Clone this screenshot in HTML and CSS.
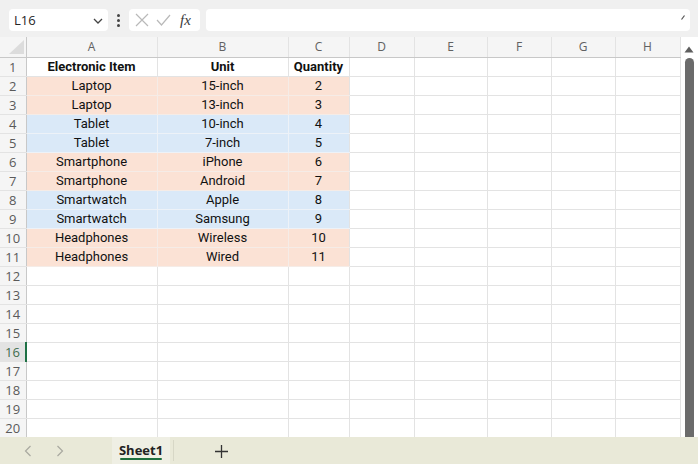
FILE: index.html
```html
<!DOCTYPE html>
<html>
<head>
<meta charset="utf-8">
<link rel="stylesheet" href="styles.css">
</head>
<body>
<div class="app">
  <div class="toolbar">
    <div class="namebox">
      <span class="name">L16</span>
      <svg class="chev" width="10" height="6" viewBox="0 0 10 6"><path d="M1 1 L5 5 L9 1" fill="none" stroke="#444" stroke-width="1.3"/></svg>
    </div>
    <div class="dots"><span></span><span></span><span></span></div>
    <div class="fbtns">
      <svg width="14" height="14" viewBox="0 0 14 14"><path d="M1 1 L13 13 M13 1 L1 13" stroke="#b9b9b9" stroke-width="1.2" fill="none"/></svg>
      <svg width="15" height="12" viewBox="0 0 15 12"><path d="M1 6 L5.5 11 L14 1" stroke="#b9b9b9" stroke-width="1.2" fill="none"/></svg>
      <span class="fx">fx</span>
    </div>
    <div class="finput">
      <svg class="expand" width="4" height="5" viewBox="0 0 4 5"><path d="M0.5 4.5 L3.5 0.5" stroke="#555" stroke-width="1.2"/></svg>
    </div>
  </div>

  <div class="sheet">
    <table class="grid">
      <colgroup>
        <col class="c-rh"><col class="c-a"><col class="c-b"><col class="c-c"><col class="c-d"><col class="c-e"><col class="c-f"><col class="c-g"><col class="c-h">
      </colgroup>
      <thead>
        <tr>
          <th class="corner"><svg width="15" height="14" viewBox="0 0 15 14"><path d="M15 0 L15 14 L0 14 Z" fill="#dcdcdc"/></svg></th>
          <th>A</th><th>B</th><th>C</th><th>D</th><th>E</th><th>F</th><th>G</th><th>H</th>
        </tr>
      </thead>
      <tbody>
        <tr><th>1</th><td class="b">Electronic Item</td><td class="b">Unit</td><td class="b">Quantity</td><td></td><td></td><td></td><td></td><td></td></tr>
        <tr class="pe"><th>2</th><td>Laptop</td><td>15-inch</td><td>2</td><td></td><td></td><td></td><td></td><td></td></tr>
        <tr class="pe"><th>3</th><td>Laptop</td><td>13-inch</td><td>3</td><td></td><td></td><td></td><td></td><td></td></tr>
        <tr class="bl"><th>4</th><td>Tablet</td><td>10-inch</td><td>4</td><td></td><td></td><td></td><td></td><td></td></tr>
        <tr class="bl"><th>5</th><td>Tablet</td><td>7-inch</td><td>5</td><td></td><td></td><td></td><td></td><td></td></tr>
        <tr class="pe"><th>6</th><td>Smartphone</td><td>iPhone</td><td>6</td><td></td><td></td><td></td><td></td><td></td></tr>
        <tr class="pe"><th>7</th><td>Smartphone</td><td>Android</td><td>7</td><td></td><td></td><td></td><td></td><td></td></tr>
        <tr class="bl"><th>8</th><td>Smartwatch</td><td>Apple</td><td>8</td><td></td><td></td><td></td><td></td><td></td></tr>
        <tr class="bl"><th>9</th><td>Smartwatch</td><td>Samsung</td><td>9</td><td></td><td></td><td></td><td></td><td></td></tr>
        <tr class="pe"><th>10</th><td>Headphones</td><td>Wireless</td><td>10</td><td></td><td></td><td></td><td></td><td></td></tr>
        <tr class="pe"><th>11</th><td>Headphones</td><td>Wired</td><td>11</td><td></td><td></td><td></td><td></td><td></td></tr>
        <tr><th>12</th><td></td><td></td><td></td><td></td><td></td><td></td><td></td><td></td></tr>
        <tr><th>13</th><td></td><td></td><td></td><td></td><td></td><td></td><td></td><td></td></tr>
        <tr><th>14</th><td></td><td></td><td></td><td></td><td></td><td></td><td></td><td></td></tr>
        <tr><th>15</th><td></td><td></td><td></td><td></td><td></td><td></td><td></td><td></td></tr>
        <tr><th class="sel">16</th><td></td><td></td><td></td><td></td><td></td><td></td><td></td><td></td></tr>
        <tr><th>17</th><td></td><td></td><td></td><td></td><td></td><td></td><td></td><td></td></tr>
        <tr><th>18</th><td></td><td></td><td></td><td></td><td></td><td></td><td></td><td></td></tr>
        <tr><th>19</th><td></td><td></td><td></td><td></td><td></td><td></td><td></td><td></td></tr>
        <tr><th>20</th><td></td><td></td><td></td><td></td><td></td><td></td><td></td><td></td></tr>
      </tbody>
    </table>
    <div class="vscroll">
      <svg class="up" width="10" height="7" viewBox="0 0 10 7"><path d="M5 0.5 L9.5 6.5 L0.5 6.5 Z" fill="#5f5f5f"/></svg>
      <div class="thumb"></div>
    </div>
  </div>

  <div class="tabbar">
    <div class="nav">
      <svg width="8" height="12" viewBox="0 0 8 12"><path d="M6.5 1 L1.5 6 L6.5 11" fill="none" stroke="#a9a9a0" stroke-width="1.2"/></svg>
      <svg width="8" height="12" viewBox="0 0 8 12"><path d="M1.5 1 L6.5 6 L1.5 11" fill="none" stroke="#a9a9a0" stroke-width="1.2"/></svg>
    </div>
    <div class="tab"><span>Sheet1</span></div>
    <div class="sep"></div>
    <div class="add"><svg width="13" height="13" viewBox="0 0 13 13"><path d="M6.5 0 V13 M0 6.5 H13" stroke="#333" stroke-width="1.3"/></svg></div>
  </div>
</div>
</body>
</html>
```

FILE: styles.css
```css
* { box-sizing: border-box; }
html, body { margin: 0; padding: 0; }
body {
  width: 698px;
  height: 464px;
  overflow: hidden;
  background: #ffffff;
  font-family: "Open Sans", "Noto Sans", sans-serif;
}
.app { display: flex; flex-direction: column; height: 464px; }

.toolbar {
  height: 37px;
  background: #f0f0f0;
  display: flex;
  align-items: flex-start;
  padding: 9px 8px 0 9px;
}
.namebox {
  width: 99px;
  height: 22px;
  background: #fff;
  border-radius: 4px;
  display: flex;
  align-items: center;
  justify-content: space-between;
  padding: 0 5px 0 5px;
}
.name { font-size: 13px; color: #262626; font-family: "Open Sans", sans-serif; }
.chev { margin-top: 2px; }
.dots {
  width: 21px;
  height: 22px;
  display: flex;
  flex-direction: column;
  align-items: center;
  justify-content: center;
  gap: 2px;
}
.dots span { width: 3px; height: 3px; border-radius: 50%; background: #444; }
.fbtns {
  width: 71px;
  height: 22px;
  background: #fff;
  border-radius: 4px;
  display: flex;
  align-items: center;
  gap: 7px;
  padding-left: 6px;
}
.fx {
  font-family: "Liberation Serif", "DejaVu Serif", serif;
  font-style: italic;
  font-size: 15px;
  color: #3a3a3a;
  margin-left: 2px;
}
.finput {
  margin-left: 6px;
  width: 484px;
  height: 22px;
  background: #fff;
  border-radius: 4px;
  display: flex;
  justify-content: flex-end;
  align-items: flex-start;
  padding: 6px 5px 0 0;
}
.expand { display: block; }

.sheet { display: flex; height: 400px; }
.grid {
  border-collapse: collapse;
  table-layout: fixed;
  width: 680px;
}
.c-rh { width: 26px; }
.c-a { width: 131px; }
.c-b { width: 131px; }
.c-c { width: 61px; }
.c-d { width: 65px; }
.c-e { width: 73px; }
.c-f { width: 64px; }
.c-g { width: 64px; }
.c-h { width: 65px; }

.grid thead th {
  height: 20px;
  background: #f5f5f5;
  font-weight: normal;
  font-size: 12px;
  color: #616161;
  border-right: 1px solid #e3e3e3;
  border-bottom: 1px solid #c8c8c8;
  padding: 0;
  text-align: center;
  font-family: "Open Sans", sans-serif;
}
.grid thead th.corner {
  text-align: right;
  padding: 3px 2px 0 0;
  vertical-align: top;
  border-right: 1px solid #c8c8c8;
}
.grid thead th.corner svg { display: block; margin-left: auto; }
.grid tbody th {
  height: 19px;
  background: #f5f5f5;
  font-weight: normal;
  font-size: 13px;
  color: #5a5a5a;
  border-right: 1px solid #c8c8c8;
  border-bottom: 1px solid #e3e3e3;
  padding: 0;
  text-align: center;
  font-family: "Open Sans", sans-serif;
}
.grid tbody th.sel {
  background: #e3e3e3;
  color: #3f6d4f;
  border-right: 2px solid #1e7145;
}
.grid td {
  height: 19px;
  border-right: 1px solid #e3e3e3;
  border-bottom: 1px solid #e3e3e3;
  padding: 0;
  text-align: center;
  font-family: "Roboto", sans-serif;
  font-size: 13px;
  color: #111;
  line-height: 18px;
  overflow: hidden;
  white-space: nowrap;
}
.grid td.b { font-weight: bold; }
.pe td:nth-child(-n+4) { background: #fbe2d5; border-color: #f5ece7; }
.bl td:nth-child(-n+4) { background: #dae9f8; border-color: #edf2f8; }
.pe td:nth-child(4), .bl td:nth-child(4) { border-right-color: #e3e3e3; }

.vscroll {
  width: 18px;
  background: #fff;
  display: flex;
  flex-direction: column;
  align-items: center;
  padding-top: 9px;
}
.thumb {
  margin-top: 5px;
  width: 9px;
  flex: 1;
  background: #6b6b6b;
  border-radius: 5px 5px 0 0;
}

.tabbar {
  height: 27px;
  background: #e9e9d8;
  display: flex;
  align-items: stretch;
}
.nav {
  width: 112px;
  display: flex;
  align-items: center;
  gap: 24px;
  padding-left: 24px;
}
.tab {
  width: 58px;
  background: #efefe4;
  display: flex;
  align-items: center;
  justify-content: center;
  position: relative;
}
.tab span {
  font-family: "Open Sans", sans-serif;
  font-weight: bold;
  font-size: 13px;
  color: #222;
  margin-top: -2px;
}
.tab::after {
  content: "";
  position: absolute;
  left: 8px;
  right: 8px;
  bottom: 4px;
  height: 2px;
  border-radius: 1px;
  background: #1e6f3e;
}
.sep {
  width: 1px;
  margin: 3px 0 3px 3px;
  background: #d7d7c6;
}
.add {
  margin-left: 41px;
  display: flex;
  align-items: center;
}
.add svg { display: block; margin-top: 2px; }
```
